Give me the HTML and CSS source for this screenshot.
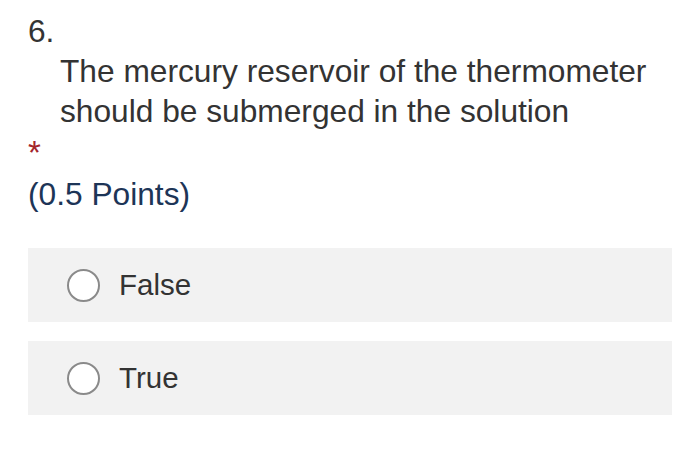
FILE: index.html
```html
<!DOCTYPE html>
<html>
<head>
<meta charset="utf-8">
<link rel="stylesheet" href="styles.css">
</head>
<body>
<div class="question">
  <div class="num">6.</div>
  <div class="title">The mercury reservoir of the thermometer should be submerged in the solution</div>
  <div class="required">*</div>
  <div class="points">(0.5 Points)</div>
  <div class="options">
    <label class="option"><span class="radio"></span><span class="label">False</span></label>
    <label class="option"><span class="radio"></span><span class="label">True</span></label>
  </div>
</div>
</body>
</html>
```
FILE: styles.css
```css
html, body {
  margin: 0;
  padding: 0;
  background: #ffffff;
}
body {
  font-family: "Liberation Sans", Arial, sans-serif;
  font-size: 31.7px;
  line-height: 40px;
  color: #333333;
}
.question {
  padding: 11px 28px 0 28px;
}
.num {
  height: 40px;
}
.title {
  padding-left: 32px;
  width: 610px;
}
.required {
  color: #a4262c;
  font-size: 33px;
  margin-top: 2px;
  height: 40px;
}
.points {
  color: #1d3557;
  margin-top: 1px;
}
.options {
  margin-top: 34px;
  display: flex;
  flex-direction: column;
  gap: 19px;
}
.option {
  display: flex;
  align-items: center;
  height: 74px;
  width: 644px;
  background: #f2f2f2;
  padding-left: 39px;
  box-sizing: border-box;
}
.radio {
  width: 33px;
  height: 33px;
  border: 2.5px solid #8a8a8a;
  border-radius: 50%;
  box-sizing: border-box;
  background: #ffffff;
  margin-right: 19px;
  flex: none;
}
.label {
  font-size: 29.5px;
  color: #333333;
}
```
